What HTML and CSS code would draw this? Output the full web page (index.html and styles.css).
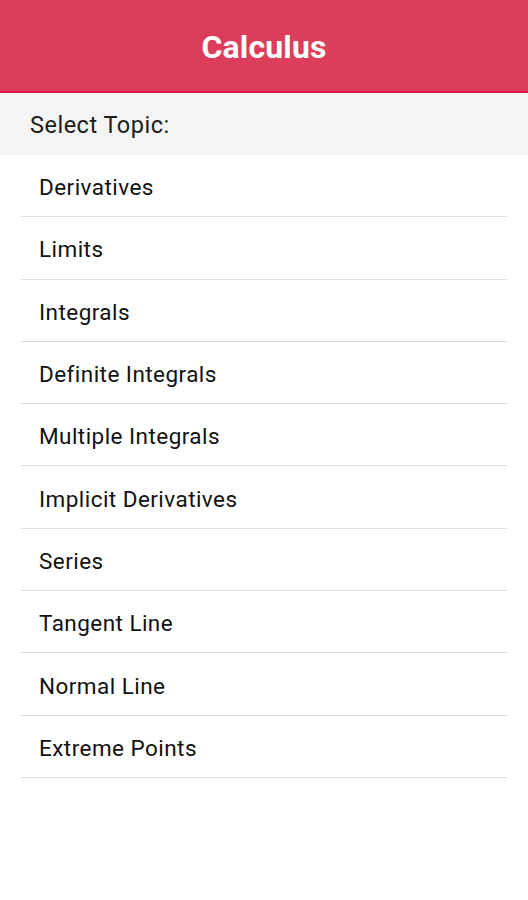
FILE: index.html
```html
<!DOCTYPE html>
<html>
<head>
<meta charset="utf-8">
<link rel="stylesheet" href="styles.css">
</head>
<body>
<header class="appbar"><h1 class="title">Calculus</h1></header>
<div class="section">Select Topic:</div>
<ul class="topics">
  <li class="topic">Derivatives</li>
  <li class="topic">Limits</li>
  <li class="topic">Integrals</li>
  <li class="topic">Definite Integrals</li>
  <li class="topic">Multiple Integrals</li>
  <li class="topic">Implicit Derivatives</li>
  <li class="topic">Series</li>
  <li class="topic">Tangent Line</li>
  <li class="topic">Normal Line</li>
  <li class="topic">Extreme Points</li>
</ul>
</body>
</html>
```
FILE: styles.css
```css
html, body {
  margin: 0;
  padding: 0;
  background: #ffffff;
  font-family: Roboto, "Liberation Sans", sans-serif;
}
.appbar {
  height: 91px;
  background: #dc3d5a;
  border-bottom: 2px solid #e0184a;
  display: flex;
  align-items: center;
  justify-content: center;
}
.title {
  margin: 0;
  color: #ffffff;
  font-size: 32px;
  font-weight: 700;
  letter-spacing: 0.15px;
  padding-top: 3px;
}
.section {
  height: 62px;
  background: #f4f4f4;
  display: flex;
  align-items: center;
  padding-left: 30px;
  padding-top: 1px;
  box-sizing: border-box;
  font-size: 23.5px;
  letter-spacing: 0.5px;
  color: #1c1c1c;
}
.topics {
  list-style: none;
  margin: 0 21px;
  padding: 0;
}
.topic {
  height: 58.3px;
  padding-top: 3px;
  border-bottom: 1px solid #dcdcdc;
  display: flex;
  align-items: center;
  box-sizing: content-box;
  padding-left: 18px;
  font-size: 22.5px;
  letter-spacing: 0.45px;
  color: #111111;
}
```
